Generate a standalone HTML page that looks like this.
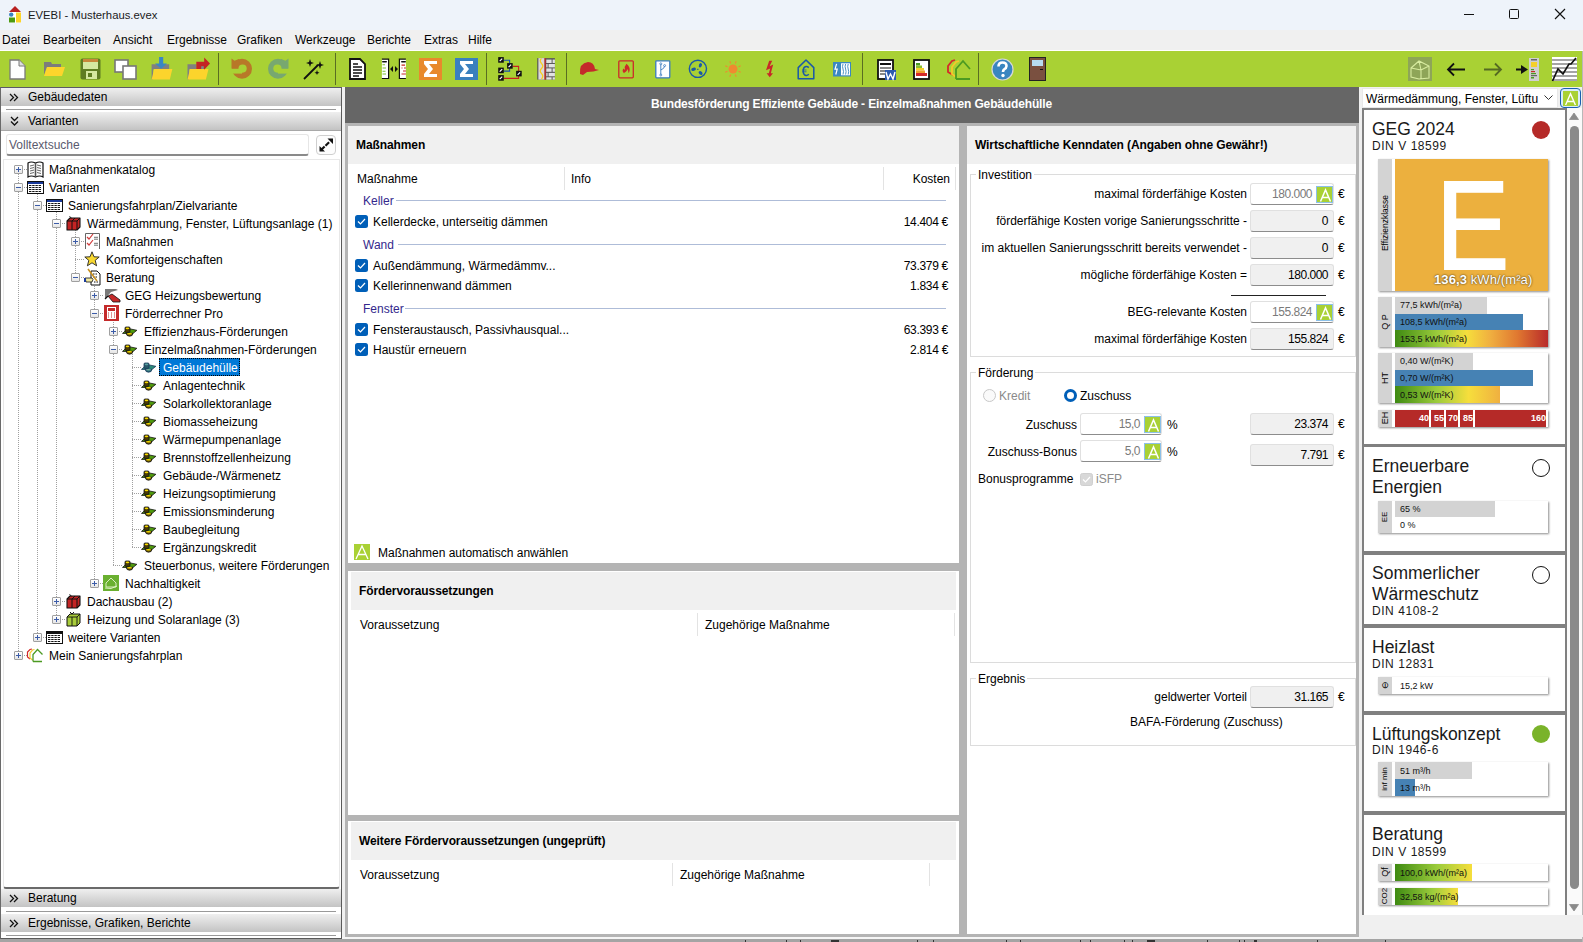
<!DOCTYPE html>
<html><head><meta charset="utf-8">
<style>
*{box-sizing:border-box;margin:0;padding:0}
html,body{width:1583px;height:942px;overflow:hidden;background:#f0f0f0}
body{font-family:"Liberation Sans",sans-serif;font-size:12px;color:#000;position:relative}
.a{position:absolute}
.t{position:absolute;white-space:nowrap;line-height:14px}
svg{position:absolute;overflow:visible}
#title{left:0;top:0;width:1583px;height:30px;background:#eef3fa}
#menu{left:0;top:30px;width:1583px;height:21px;background:#f0f0f0;border-bottom:1px solid #fff}
#tb{left:0;top:51px;width:1583px;height:36px;background:#a9d134}
.sep{position:absolute;top:53px;width:1px;height:32px;background:#5a6e22}
#lp{left:0;top:87px;width:342px;height:852px;background:#fff;border-top:1px solid #5a5a66;border-left:1px solid #6a6a6a;border-right:1px solid #5a5a5a;border-bottom:1px solid #5a5a5a}
.acc{position:absolute;left:1px;width:340px;height:18px;background:linear-gradient(#efefef,#c3c3c3)}
.accl{position:absolute;left:6px;width:330px;height:1px;background:#999}
.acc .t{left:26px;top:2px}
.ex{position:absolute;width:9px;height:9px;border:1px solid #a0a0a0;border-radius:1px;background:linear-gradient(#fff,#e6e6e6)}
.ex i{position:absolute;left:1px;top:3px;width:5px;height:1px;background:#3c5ca8}
.ex b{position:absolute;left:3px;top:1px;width:1px;height:5px;background:#3c5ca8}
.vl{position:absolute;width:1px;border-left:1px dotted #a0a0a0}
.hl{position:absolute;height:1px;border-top:1px dotted #a0a0a0}
#cf{left:345px;top:87px;width:1014px;height:850px;background:#b4b4b4}
#ch{left:345px;top:87px;width:1014px;height:36px;background:#666;color:#fff;font-weight:bold}
.pn{position:absolute;background:#fff}
.ph{position:absolute;background:#f0f0f0}
.b{font-weight:bold;letter-spacing:-0.1px}
.nm{letter-spacing:-0.5px}
.cs{position:absolute;width:1px;background:#e3e3e3}
.grp{position:absolute;border:1px solid #dcdcdc}
.tbx{position:absolute;height:22px;background:#f0f0f0;border:1px solid #e0e0e0;border-bottom:1px solid #8c8c8c;border-radius:3px}
.tbx.w{background:#fff}
.tbx .t{right:4px;top:3px}
.ab{position:absolute;width:17px;height:17px;background:#a9d134;color:#fff;font-size:17px;line-height:17px;text-align:center;border:1px solid #8cc0e8}
#sb{left:1359px;top:87px;width:224px;height:852px;background:#f0f0f0}
.card{position:absolute;left:1364px;width:201px;background:#fff}
.ct{position:absolute;left:8px;font-size:17.5px;line-height:20px;color:#1a1a1a}
.cd{position:absolute;left:8px;font-size:12px;letter-spacing:0.55px;line-height:13px;color:#1a1a1a}
.box{position:absolute;left:14px;width:170px;background:#fff;box-shadow:1px 1px 2px rgba(0,0,0,.45)}
.lab{position:absolute;left:0;top:0;bottom:0;width:14px;background:#d3d3d3}
.bar{position:absolute;left:17px;height:16px}
.bt{position:absolute;left:5px;top:2px;font-size:9px;line-height:12px;color:#111;white-space:nowrap}
.sep4{position:absolute;left:1364px;width:202px;height:4px;background:#808080}
</style></head><body>

<div class="a" id="title">
<svg style="left:8px;top:5px" width="14" height="18" viewBox="0 0 14 18"><path d="M1 7 L7 1 L13 7 Z" fill="#b82020"/><rect x="1" y="7" width="12" height="11" fill="#fff"/><circle cx="3.2" cy="9.6" r="2.2" fill="#3a82c0"/><rect x="8" y="7.5" width="5" height="10" fill="#fcd42a"/><rect x="1" y="12.5" width="6" height="5" fill="#4c9a12"/></svg>
<div class="t" style="left:28px;top:8px;font-size:11.3px;color:#1a1a1a">EVEBI - Musterhaus.evex</div>
<div class="a" style="left:1464px;top:14px;width:10px;height:1px;background:#111"></div>
<div class="a" style="left:1509px;top:9px;width:10px;height:10px;border:1px solid #111;border-radius:1.5px"></div>
<svg style="left:1554px;top:8px" width="12" height="12"><path d="M1 1 L11 11 M11 1 L1 11" stroke="#111" stroke-width="1.15"/></svg>
</div>
<div class="a" id="menu">
<div class="t" style="left:2px;top:3px">Datei</div>
<div class="t" style="left:43px;top:3px">Bearbeiten</div>
<div class="t" style="left:113px;top:3px">Ansicht</div>
<div class="t" style="left:167px;top:3px">Ergebnisse</div>
<div class="t" style="left:237px;top:3px">Grafiken</div>
<div class="t" style="left:295px;top:3px">Werkzeuge</div>
<div class="t" style="left:367px;top:3px">Berichte</div>
<div class="t" style="left:424px;top:3px">Extras</div>
<div class="t" style="left:468px;top:3px">Hilfe</div>
</div>
<div class="a" id="tb"></div>
<div class="sep" style="left:218px"></div>
<div class="sep" style="left:335px"></div>
<div class="sep" style="left:486px"></div>
<div class="sep" style="left:566px"></div>
<div class="sep" style="left:862px"></div>
<div class="sep" style="left:978px"></div>
<svg style="left:9px;top:59px" width="17" height="21" viewBox="0 0 17 21"><path d="M1 1 H10 L16 7 V20 H1 Z" fill="#fff" stroke="#7a7a7a" stroke-width="1.3"/><path d="M10 1 V7 H16" fill="#ddd" stroke="#7a7a7a" stroke-width="1"/></svg>
<svg style="left:43px;top:61px" width="23" height="17" viewBox="0 0 23 17"><path d="M1 1 H8 L9 3 H18 V6 H1 Z" fill="#7c7c7c"/><path d="M1 4 V14 L4 6 Z" fill="#7c7c7c"/><path d="M4 6 H22 L19 15 H1 Z" fill="#fcd52c"/></svg>
<svg style="left:80px;top:58px" width="21" height="22" viewBox="0 0 21 22"><rect x="0.5" y="0.5" width="20" height="21" rx="2" fill="#5f7d22"/><rect x="3" y="1" width="15" height="3" fill="#c8873a"/><rect x="3" y="4" width="15" height="7" fill="#d5e8a0"/><rect x="6" y="13" width="11" height="8" fill="#d5e8a0"/><rect x="8" y="15" width="4" height="4" fill="#5f7d22"/></svg>
<svg style="left:114px;top:59px" width="23" height="21" viewBox="0 0 23 21"><rect x="1" y="1" width="13" height="12" fill="#fff" stroke="#777" stroke-width="1.6"/><rect x="9" y="7" width="13" height="13" fill="#fff" stroke="#777" stroke-width="1.6"/></svg>
<svg style="left:146px;top:55px" width="28" height="28" viewBox="0 0 28 28"><path d="M5.6 9.2 H23.2 V14.2 H7 V24.5 H5.6 Z" fill="#808080"/><path d="M8.2 14 H26.4 L23.8 24.5 H5.6 Z" fill="#fcd42c"/><path d="M13.1 1.9 H17.2 V8.4 H21 L15.2 13.7 L9 8.4 H13.1 Z" fill="#3a86c4"/></svg>
<svg style="left:182px;top:55px" width="30" height="28" viewBox="0 0 30 28"><g transform="translate(-36,0)"><path d="M41.5 9.2 H50.3 V14.2 H43 V24.5 H41.5 Z" fill="#808080"/><path d="M44 14 H62.5 L59.9 24.5 H41.5 Z" fill="#fcd42c"/><path d="M50.3 6.7 H58.2 V2.6 L64 8.6 L58.2 14.8 V14 H50.3 Z" fill="#c42424"/><rect x="55.2" y="11.2" width="2.6" height="2.8" fill="#7a8a8a"/></g></svg>
<svg style="left:228px;top:55px" width="28" height="28" viewBox="0 0 28 28"><circle cx="14" cy="13.8" r="10" fill="#b87828"/><path d="M3.5 3.5 L6.5 5.8 L11 4 L14 13.8 L3.5 13.8 Z" fill="#b87828"/><rect x="0" y="13.8" width="14" height="4.8" fill="#a9d134"/><circle cx="14.6" cy="13.6" r="4.1" fill="#a9d134"/></svg>
<svg style="left:264px;top:55px" width="28" height="28" viewBox="0 0 28 28"><g transform="translate(28,0) scale(-1,1)"><circle cx="14" cy="13.8" r="10" fill="#78a870"/><path d="M3.5 3.5 L6.5 5.8 L11 4 L14 13.8 L3.5 13.8 Z" fill="#78a870"/><rect x="0" y="13.8" width="14" height="4.8" fill="#a9d134"/><circle cx="14.6" cy="13.6" r="4.1" fill="#a9d134"/></g></svg>
<svg style="left:303px;top:58px" width="23" height="22" viewBox="0 0 23 22"><path d="M1 21 L15 7" stroke="#111" stroke-width="1.8"/><path d="M7 1 L8 4 L11 5 L8 6 L7 9 L6 6 L3 5 L6 4 Z M17 3 L18 6 L21 7 L18 8 L17 11 L16 8 L13 7 L16 6 Z M14 12 L14.7 14 L16.5 14.7 L14.7 15.4 L14 17 L13.3 15.4 L11.5 14.7 L13.3 14 Z" fill="#111"/></svg>
<svg style="left:349px;top:58px" width="17" height="22" viewBox="0 0 17 22"><path d="M1 1 H11 L16 6 V21 H1 Z" fill="#fff" stroke="#111" stroke-width="1.8"/><path d="M4 6 H9 M4 9 H13 M4 12 H13 M4 15 H13 M4 18 H10" stroke="#111" stroke-width="1.3"/></svg>
<svg style="left:376px;top:55px" width="32" height="28" viewBox="0 0 32 28"><path d="M5.9 4.2 H12.6 V23.5 H5.9" fill="#fff" stroke="#111" stroke-width="1.2"/><rect x="6" y="5.9" width="5" height="1.6" rx="0.8" fill="#111"/><path d="M6.5 9.8 H9 M6.5 13 H10 M6.5 16.2 H9.5 M6.5 19 H10" stroke="#7cc030" stroke-width="1.1"/><path d="M14 14 L17 11 V17 Z M22 14 L19 11 V17 Z" fill="#111"/><path d="M29.9 4.2 H23.4 V23.5 H29.9" fill="#fff" stroke="#111" stroke-width="1.2"/><rect x="25" y="5.9" width="5" height="1.6" rx="0.8" fill="#111"/><path d="M25.5 10.2 H29 M25.5 13 H26.5 M28 13 H29.9 M27 16 H29.9 M25.5 19 H29.9" stroke="#c82424" stroke-width="1.2"/></svg>
<svg style="left:419px;top:58px" width="23" height="22" viewBox="0 0 23 22"><rect x="0" y="0" width="23" height="22" fill="#e8892c"/><path d="M5 3 H18 V6 H10 L14 11 L10 16 H18 V19 H5 V16 L9 11 L5 6 Z" fill="#fff"/></svg>
<svg style="left:455px;top:58px" width="23" height="22" viewBox="0 0 23 22"><rect x="0" y="0" width="23" height="22" fill="#3a80be"/><path d="M5 3 H18 V6 H10 L14 11 L10 16 H18 V19 H5 V16 L9 11 L5 6 Z" fill="#fff"/></svg>
<svg style="left:494px;top:55px" width="30" height="28" viewBox="0 0 30 28"><path d="M9.8 5.3 H15.6 V8.5 M9.8 16.1 H15.6 V13.5" fill="none" stroke="#1a50b0" stroke-width="1.1"/><path d="M18.8 11.4 H24.6 V16 M9.8 23.4 H24.6 V21" fill="none" stroke="#c82020" stroke-width="1.1"/><rect x="4.2" y="2.1" width="5.6" height="5.6" fill="#111"/><path d="M5.7 6.1 L8.2 3.6" stroke="#fff" stroke-width="1.2"/><rect x="13.1" y="8.1" width="5.6" height="5.6" fill="#111"/><path d="M14.6 12.1 L17.1 9.6" stroke="#fff" stroke-width="1.2"/><rect x="4.2" y="12.6" width="5.6" height="5.6" fill="#111"/><path d="M5.7 16.6 L8.2 14.1" stroke="#fff" stroke-width="1.2"/><rect x="22.1" y="15.8" width="5.6" height="5.6" fill="#111"/><path d="M23.6 19.8 L26.1 17.3" stroke="#fff" stroke-width="1.2"/><rect x="4.2" y="20.1" width="5.6" height="5.6" fill="#111"/><path d="M5.7 24.1 L8.2 21.6" stroke="#fff" stroke-width="1.2"/></svg>
<svg style="left:537px;top:58px" width="18" height="22" viewBox="0 0 18 22"><g transform="translate(-43,-3)"><rect x="43.2" y="3.1" width="17.7" height="21.5" fill="#5a5a5a"/><rect x="44.4" y="3.1" width="6.2" height="21.5" fill="#dadada"/><path d="M47.5 3.5 Q45 5.5 47.5 8.5 Q50 11 47.5 13.5 Q45 16 47.5 18.5 Q50 21 47.5 24" fill="none" stroke="#f8cc20" stroke-width="1.3"/><rect x="50.5" y="3.1" width="1.2" height="21.5" fill="#c82020"/><rect x="52.3" y="4.6" width="5.3" height="3.4" fill="#e2e2e2"/><rect x="58.6" y="4.6" width="2.3" height="3.4" fill="#e2e2e2"/><rect x="52.3" y="9" width="1.3" height="3.4" fill="#e2e2e2"/><rect x="54.6" y="9" width="6.3" height="3.4" fill="#e2e2e2"/><rect x="52.3" y="13.4" width="5.3" height="3.4" fill="#e2e2e2"/><rect x="58.6" y="13.4" width="2.3" height="3.4" fill="#e2e2e2"/><rect x="52.3" y="17.9" width="1.3" height="3.4" fill="#e2e2e2"/><rect x="54.6" y="17.9" width="6.3" height="3.4" fill="#e2e2e2"/><rect x="52.3" y="22.3" width="5.3" height="2.3" fill="#e2e2e2"/><rect x="58.6" y="22.3" width="2.3" height="2.3" fill="#e2e2e2"/></g></svg>
<svg style="left:579px;top:61px" width="21" height="15" viewBox="0 0 21 15"><path d="M1 13 Q0 2 9 1 Q15 1 16 8 L20 9 Q15 11 8 11 L4 14 Z" fill="#c42a2a"/></svg>
<svg style="left:618px;top:60px" width="17" height="19" viewBox="0 0 17 19"><rect x="0.8" y="0.8" width="14.5" height="17" rx="1" fill="none" stroke="#cc2a2a" stroke-width="1.3"/><path d="M8.5 3.8 Q12.5 7 11.5 11 Q11 13 10.5 13 Q10.5 10 9 9 Q9.5 11 7.5 12 Q6.5 12.5 6 13.2 Q3.5 11 5.5 8.5 Q6.5 10 7 9.5 Q6 6.5 8.5 3.8 Z" fill="#cc2a2a"/></svg>
<svg style="left:655px;top:60px" width="16" height="19" viewBox="0 0 16 19"><rect x="0.8" y="0.8" width="14" height="17" rx="0.8" fill="#fff" stroke="#3a7ac0" stroke-width="1.3"/><path d="M5.8 4.5 V14.5 M5.8 10 Q9.5 8.5 9.5 6.3" fill="none" stroke="#3a7ac0" stroke-width="0.9"/><circle cx="5.8" cy="3.8" r="1" fill="none" stroke="#3a7ac0" stroke-width="0.8"/><circle cx="5.8" cy="15" r="1" fill="none" stroke="#3a7ac0" stroke-width="0.8"/><circle cx="9.6" cy="5.6" r="1" fill="none" stroke="#3a7ac0" stroke-width="0.8"/></svg>
<svg style="left:688px;top:59px" width="20" height="20" viewBox="0 0 20 20"><circle cx="9.9" cy="9.8" r="8.6" fill="none" stroke="#1a58a8" stroke-width="1.4"/><ellipse cx="12.4" cy="6.3" rx="1.5" ry="2.3" transform="rotate(20 12.4 6.3)" fill="#1a58a8"/><ellipse cx="5.6" cy="10.3" rx="2.4" ry="1.6" transform="rotate(-15 5.6 10.3)" fill="#1a58a8"/><ellipse cx="12.6" cy="14" rx="2.2" ry="1.6" transform="rotate(40 12.6 14)" fill="#1a58a8"/><path d="M9 10.3 H10.5" stroke="#1a58a8" stroke-width="1"/></svg>
<svg style="left:724px;top:60px" width="18" height="18" viewBox="0 0 18 18"><circle cx="9" cy="9" r="4.5" fill="#f08a30"/><path d="M14.5 11.3 L16.7 12.2 M11.3 14.5 L12.2 16.7 M6.7 14.5 L5.8 16.7 M3.5 11.3 L1.3 12.2 M3.5 6.7 L1.3 5.8 M6.7 3.5 L5.8 1.3 M11.3 3.5 L12.2 1.3 M14.5 6.7 L16.7 5.8 " stroke="#f08a30" stroke-width="1.1"/></svg>
<svg style="left:765px;top:60px" width="10" height="18" viewBox="0 0 10 18"><path d="M4.2 0.8 L7.2 0.8 L4.6 6.2 L8.2 4.6 L5.8 13.2 L8 13.2 L4.8 17.2 L1.6 13.2 L3.8 13.2 L5.2 8.6 L1 10.2 Z" fill="#c82828"/></svg>
<svg style="left:797px;top:59px" width="18" height="21" viewBox="0 0 18 21"><path d="M1.2 8.6 L9 1 L16.8 8.6 V19.8 H1.2 Z" fill="none" stroke="#1a58a8" stroke-width="1.5" stroke-linejoin="round"/><path d="M11.8 8.6 Q10.5 7.3 9 7.5 Q6.2 8 6.2 12 Q6.2 16 9 16.4 Q10.5 16.6 11.8 15.3" fill="none" stroke="#1a58a8" stroke-width="1.5"/><path d="M5.2 11 H9.5 M5.2 12.8 H9.5" stroke="#1a58a8" stroke-width="0.8"/></svg>
<svg style="left:833px;top:62px" width="18" height="15" viewBox="0 0 18 15"><rect x="0" y="0" width="18" height="14.5" fill="#3a88c0"/><path d="M3.6 1.8 L2 7.2 H4.2 L2.8 12.5" stroke="#fff" stroke-width="1.2" fill="none"/><rect x="8" y="1.3" width="9" height="12" fill="#fff"/><path d="M10 2 Q9 4.5 10 7 Q11 9.5 10 12.5 M12.6 2 Q11.6 4.5 12.6 7 Q13.6 9.5 12.6 12.5 M15.2 2 Q14.2 4.5 15.2 7 Q16.2 9.5 15.2 12.5" stroke="#3a88c0" stroke-width="0.9" fill="none"/></svg>
<svg style="left:877px;top:59px" width="20" height="22" viewBox="0 0 20 22"><rect x="1" y="1" width="15" height="19" fill="#fff" stroke="#111" stroke-width="1.8"/><path d="M3 4 H14 V6 H3 Z" fill="#111"/><path d="M3 9 H14 M3 12 H8 M3 15 H8" stroke="#111" stroke-width="1"/><rect x="8" y="11" width="11" height="10" fill="#2a5ab0"/><path d="M9 13 L11 20 L13.5 15 L16 20 L18 13" stroke="#fff" stroke-width="1.4" fill="none"/></svg>
<svg style="left:913px;top:59px" width="17" height="21" viewBox="0 0 17 21"><rect x="1" y="1" width="15" height="19" fill="#fff" stroke="#111" stroke-width="1.8"/><rect x="3" y="4" width="4" height="2.5" fill="#4a9a22"/><rect x="3" y="6.5" width="6" height="2.5" fill="#8cc030"/><rect x="3" y="9" width="8" height="2.5" fill="#f5d02a"/><rect x="3" y="11.5" width="9" height="2.5" fill="#f0a030"/><rect x="3" y="14" width="11" height="3" fill="#d42a2a"/></svg>
<svg style="left:947px;top:59px" width="24" height="21" viewBox="0 0 24 21"><path d="M6 16 L1 13 V7 L5 2 L8 1" fill="none" stroke="#d42a2a" stroke-width="1.8"/><path d="M9 18 L5 15 V8 L9 3 L12 2" fill="none" stroke="#f5c82a" stroke-width="1.8"/><path d="M9 20 V10 L16 2 L23 10 M9 20 H23" fill="none" stroke="#4c9a22" stroke-width="1.8"/></svg>
<svg style="left:991px;top:58px" width="23" height="23" viewBox="0 0 23 23"><circle cx="11.5" cy="11.5" r="10.5" fill="#3a86c0" stroke="#d8d8d8" stroke-width="1.2"/><path d="M7.5 8.5 Q7.5 4.5 11.5 4.5 Q15.5 4.5 15.5 8 Q15.5 10 13 11.5 Q12 12.5 12 14" stroke="#fff" stroke-width="2.6" fill="none"/><circle cx="12" cy="17.5" r="1.7" fill="#fff"/></svg>
<svg style="left:1029px;top:57px" width="17" height="24" viewBox="0 0 17 24"><rect x="0.5" y="0.5" width="16" height="23" fill="#7a5040" stroke="#222" stroke-width="1"/><rect x="3" y="3" width="11" height="6" fill="#b8dcf0"/><rect x="11" y="12" width="3" height="1" fill="#111"/></svg>
<svg style="left:1408px;top:57px" width="24" height="24" viewBox="0 0 24 24"><rect x="0" y="0" width="24" height="24" fill="#8ea558"/><path d="M3 11 L11 4 L21 9 V21 L11 22 L3 20 Z M3 11 L13 13 L21 9 M13 13 V22 M11 4 L13 13" fill="none" stroke="#d8eca0" stroke-width="1.1"/></svg>
<svg style="left:1446px;top:62px" width="20" height="15" viewBox="0 0 20 15"><path d="M19 7.5 H2 M8 1.5 L2 7.5 L8 13.5" fill="none" stroke="#111" stroke-width="1.8"/></svg>
<svg style="left:1483px;top:62px" width="20" height="15" viewBox="0 0 20 15"><path d="M1 7.5 H18 M12 1.5 L18 7.5 L12 13.5" fill="none" stroke="#556a22" stroke-width="1.8"/></svg>
<svg style="left:1516px;top:57px" width="24" height="24" viewBox="0 0 24 24"><path d="M0 12.5 H6" stroke="#111" stroke-width="2"/><path d="M5 8 L12 12.5 L5 17 Z" fill="#111"/><rect x="13" y="1" width="10" height="23" fill="#d0d0d0"/><rect x="15" y="2" width="6" height="1.5" fill="#666"/><rect x="15" y="5" width="6" height="5" fill="#f5d02a"/><rect x="15" y="12" width="3" height="1.2" fill="#4c9a22"/><rect x="15" y="14" width="4" height="1.2" fill="#c82a2a"/><rect x="15" y="16" width="5" height="1.2" fill="#4c9a22"/><rect x="15" y="18" width="6" height="1.2" fill="#666"/><rect x="15" y="20" width="3" height="1.5" fill="#4c9a22"/></svg>
<svg style="left:1552px;top:57px" width="25" height="24" viewBox="0 0 25 24"><rect x="0" y="0" width="25" height="24" fill="#fff"/><path d="M0 3 H25 M0 7 H25 M0 11 H25 M0 15 H25 M0 19 H25 M0 23 H25" stroke="#888" stroke-width="1.4"/><path d="M0.5 24 L6 12 L11 17 L17 7 L19 7 L24 1" fill="none" stroke="#111" stroke-width="1.7"/></svg>
<div class="a" id="lp"></div>
<div class="acc" style="top:88px"><svg style="left:8px;top:5px" width="10" height="9"><path d="M1 1 L4.5 4.5 L1 8 M5 1 L8.5 4.5 L5 8" fill="none" stroke="#111" stroke-width="1.3"/></svg><div class="t" style="left:27px;top:2px">Gebäudedaten</div></div>
<div class="accl" style="top:109px"></div>
<div class="acc" style="top:112px"><svg style="left:9px;top:4px" width="9" height="11"><path d="M1 1 L4.5 4.5 L8 1 M1 5.5 L4.5 9 L8 5.5" fill="none" stroke="#111" stroke-width="1.3"/></svg><div class="t" style="left:27px;top:2px">Varianten</div></div>
<div class="a" style="left:1px;top:130px;width:340px;height:1px;background:#a8a8a8"></div>
<div class="a" style="left:6px;top:134px;width:303px;height:22px;background:#fff;border:1px solid #e6e6e6;border-bottom:2px solid #8a8a8a;border-radius:3px"><div class="t" style="left:2px;top:3px;color:#5a5a6e">Volltextsuche</div></div>
<div class="a" style="left:316px;top:135px;width:20px;height:20px;background:#fdfdfd;border:1px solid #cfcfcf;border-radius:4px"></div>
<svg style="left:319px;top:138px" width="15" height="14"><path d="M2 12 L13 1.5" stroke="#111" stroke-width="2.2" stroke-dasharray="5 1.2 5"/><path d="M0.5 8 V13.5 H6 Z M8.5 0.5 H14 V6 Z" fill="#111"/></svg>
<div class="a" style="left:3px;top:159px;width:337px;height:730px;border:1px solid #e8e8e8;border-bottom:2px solid #6a6a6a;border-radius:0 0 3px 3px;background:#fff"></div>
<div class="vl" style="left:18px;top:169px;height:486px"></div>
<div class="vl" style="left:37px;top:192px;height:445px"></div>
<div class="vl" style="left:56px;top:210px;height:409px"></div>
<div class="vl" style="left:75px;top:228px;height:49px"></div>
<div class="vl" style="left:94px;top:282px;height:301px"></div>
<div class="vl" style="left:113px;top:318px;height:247px"></div>
<div class="vl" style="left:132px;top:354px;height:193px"></div>
<div class="hl" style="left:18px;top:169px;width:9px"></div>
<div class="ex" style="left:14px;top:165px"><i></i><b></b></div>
<svg style="left:27px;top:161px" width="17" height="17" viewBox="0 0 17 17"><path d="M1 2 Q4 0 8.5 2 Q13 0 16 2 V16 Q13 14 8.5 16 Q4 14 1 16 Z" fill="#fff" stroke="#111" stroke-width="1.2"/><path d="M8.5 2 V16" stroke="#555" stroke-width="1.6"/><path d="M3 5 L7 4 M3 7.5 L7 6.5 M3 10 L7 9 M3 12.5 L7 11.5 M10 4 L14 5 M10 6.5 L14 7.5 M10 9 L14 10 M10 11.5 L14 12.5" stroke="#555" stroke-width="0.9"/></svg>
<div class="t" style="left:49px;top:163px">Maßnahmenkatalog</div>
<div class="hl" style="left:18px;top:187px;width:9px"></div>
<div class="ex" style="left:14px;top:183px"><i></i></div>
<svg style="left:27px;top:181px" width="17" height="13" viewBox="0 0 17 13"><rect x="0.5" y="0.5" width="16" height="12" fill="#fff" stroke="#111" stroke-width="1"/><rect x="1" y="1" width="15" height="2" fill="#1a3a9a"/><rect x="2.0" y="4" width="2.4" height="1" fill="#111"/><rect x="5.2" y="4" width="2.4" height="1" fill="#111"/><rect x="8.4" y="4" width="2.4" height="1" fill="#111"/><rect x="11.6" y="4" width="2.4" height="1" fill="#111"/><rect x="2.0" y="6" width="2.4" height="1" fill="#111"/><rect x="5.2" y="6" width="2.4" height="1" fill="#111"/><rect x="8.4" y="6" width="2.4" height="1" fill="#111"/><rect x="11.6" y="6" width="2.4" height="1" fill="#111"/><rect x="2.0" y="8" width="2.4" height="1" fill="#111"/><rect x="5.2" y="8" width="2.4" height="1" fill="#111"/><rect x="8.4" y="8" width="2.4" height="1" fill="#111"/><rect x="11.6" y="8" width="2.4" height="1" fill="#111"/><rect x="2.0" y="10" width="2.4" height="1" fill="#111"/><rect x="5.2" y="10" width="2.4" height="1" fill="#111"/><rect x="8.4" y="10" width="2.4" height="1" fill="#111"/><rect x="11.6" y="10" width="2.4" height="1" fill="#111"/></svg>
<div class="t" style="left:49px;top:181px">Varianten</div>
<div class="hl" style="left:37px;top:205px;width:9px"></div>
<div class="ex" style="left:33px;top:201px"><i></i></div>
<svg style="left:46px;top:199px" width="17" height="13" viewBox="0 0 17 13"><rect x="0.5" y="0.5" width="16" height="12" fill="#fff" stroke="#111" stroke-width="1"/><rect x="1" y="1" width="15" height="2" fill="#1a3a9a"/><rect x="2.0" y="4" width="2.4" height="1" fill="#111"/><rect x="5.2" y="4" width="2.4" height="1" fill="#111"/><rect x="8.4" y="4" width="2.4" height="1" fill="#111"/><rect x="11.6" y="4" width="2.4" height="1" fill="#111"/><rect x="2.0" y="6" width="2.4" height="1" fill="#111"/><rect x="5.2" y="6" width="2.4" height="1" fill="#111"/><rect x="8.4" y="6" width="2.4" height="1" fill="#111"/><rect x="11.6" y="6" width="2.4" height="1" fill="#111"/><rect x="2.0" y="8" width="2.4" height="1" fill="#111"/><rect x="5.2" y="8" width="2.4" height="1" fill="#111"/><rect x="8.4" y="8" width="2.4" height="1" fill="#111"/><rect x="11.6" y="8" width="2.4" height="1" fill="#111"/><rect x="2.0" y="10" width="2.4" height="1" fill="#111"/><rect x="5.2" y="10" width="2.4" height="1" fill="#111"/><rect x="8.4" y="10" width="2.4" height="1" fill="#111"/><rect x="11.6" y="10" width="2.4" height="1" fill="#111"/></svg>
<div class="t" style="left:68px;top:199px">Sanierungsfahrplan/Zielvariante</div>
<div class="hl" style="left:56px;top:223px;width:9px"></div>
<div class="ex" style="left:52px;top:219px"><i></i></div>
<svg style="left:66px;top:216px" width="15" height="15" viewBox="0 0 15 15"><path d="M1 5 L4 2 H14 V11 L11 14 H1 Z" fill="#c42424" stroke="#111" stroke-width="1.1" stroke-linejoin="round"/><path d="M1 5 H11 V14 M11 5 L14 2 M6 5 V14 M6 5 L9 2" stroke="#111" stroke-width="1" fill="none"/><path d="M3.5 0.5 L5.5 2" stroke="#111" stroke-width="1"/></svg>
<div class="t" style="left:87px;top:217px">Wärmedämmung, Fenster, Lüftungsanlage (1)</div>
<div class="hl" style="left:75px;top:241px;width:9px"></div>
<div class="ex" style="left:71px;top:237px"><i></i><b></b></div>
<svg style="left:85px;top:233px" width="15" height="16" viewBox="0 0 15 16"><path d="M0.5 16 V0.5 H14.5 V16" fill="#fff" stroke="#666" stroke-width="1"/><path d="M2 4 L4 6 L8 1 M2 10 L4 12 L8 7" stroke="#d03a3a" stroke-width="1.2" fill="none"/><path d="M9 4.3 H13 M9 6.2 H13 M9 10.3 H13 M9 12.2 H13" stroke="#333" stroke-width="0.7"/></svg>
<div class="t" style="left:106px;top:235px">Maßnahmen</div>
<div class="hl" style="left:75px;top:259px;width:9px"></div>
<svg style="left:84px;top:251px" width="16" height="16" viewBox="0 0 16 16"><path d="M8 0.8 L10 5.8 L15.2 6 L11.2 9.4 L12.6 14.8 L8 11.8 L3.4 14.8 L4.8 9.4 L0.8 6 L6 5.8 Z" fill="#f8d830" stroke="#222" stroke-width="0.9"/></svg>
<div class="t" style="left:106px;top:253px">Komforteigenschaften</div>
<div class="hl" style="left:75px;top:277px;width:9px"></div>
<div class="ex" style="left:71px;top:273px"><i></i></div>
<svg style="left:84px;top:269px" width="17" height="17" viewBox="0 0 17 17"><path d="M7 2 H13 L16 5 V16 H7 Z" fill="#fff" stroke="#111" stroke-width="1"/><path d="M9 5 H13 M9 8 H14 M10 13 H14" stroke="#111" stroke-dasharray="1.5 1"/><path d="M1 9 H8 Q10 10 8 13 H2 Z" fill="#f0e8a0" stroke="#111" stroke-width="0.8"/><path d="M4 0 L13 12" stroke="#c89020" stroke-width="1.5"/><rect x="0" y="9" width="2" height="4" fill="#1a3a9a"/></svg>
<div class="t" style="left:106px;top:271px">Beratung</div>
<div class="hl" style="left:94px;top:295px;width:9px"></div>
<div class="ex" style="left:90px;top:291px"><i></i><b></b></div>
<svg style="left:103px;top:288px" width="17" height="14" viewBox="0 0 17 14"><path d="M2 1 H13 L15 2 L8 4 L2 11 Z" fill="#7a7a7a"/><path d="M5 8 L9 6 L17 12 V14 H10 Z" fill="#c42a2a" stroke="#111" stroke-width="0.8"/><path d="M2 11 L5 8" stroke="#111" stroke-width="1.2"/></svg>
<div class="t" style="left:125px;top:289px">GEG Heizungsbewertung</div>
<div class="hl" style="left:94px;top:313px;width:9px"></div>
<div class="ex" style="left:90px;top:309px"><i></i></div>
<svg style="left:104px;top:305px" width="15" height="16" viewBox="0 0 15 16"><rect x="0" y="0" width="15" height="16" fill="#c42a2a"/><rect x="3" y="2" width="9" height="12" fill="#fff"/><rect x="4" y="3" width="7" height="3" fill="#c42a2a"/><path d="M4 8 H5 M7 8 H8 M10 8 H11 M4 10 H5 M7 10 H8 M10 10 H11 M4 12 H5 M7 12 H8 M10 12 H11" stroke="#c42a2a" stroke-width="1"/></svg>
<div class="t" style="left:125px;top:307px">Förderrechner Pro</div>
<div class="hl" style="left:113px;top:331px;width:9px"></div>
<div class="ex" style="left:109px;top:327px"><i></i><b></b></div>
<svg style="left:122px;top:326px" width="16" height="11" viewBox="0 0 16 11"><path d="M0.5 7.4 L3 5.2 L8 2.9 L14.9 4.3 L10.9 7.5 Z" fill="#4e9a0c" stroke="#111" stroke-width="0.8" stroke-linejoin="round"/><rect x="3" y="1" width="5" height="5.4" rx="1" fill="#4a3c06" stroke="#111" stroke-width="0.8"/><ellipse cx="5.5" cy="2.4" rx="1.8" ry="0.8" fill="#f8dc00"/><path d="M4.2 7.3 Q4.4 10.2 7.5 10.2 Q10.9 10.2 10.9 7.3 Z" fill="#6a5806" stroke="#111" stroke-width="0.8"/><ellipse cx="7.5" cy="7.8" rx="2.6" ry="0.8" fill="#f8dc00"/></svg>
<div class="t" style="left:144px;top:325px">Effizienzhaus-Förderungen</div>
<div class="hl" style="left:113px;top:349px;width:9px"></div>
<div class="ex" style="left:109px;top:345px"><i></i></div>
<svg style="left:122px;top:344px" width="16" height="11" viewBox="0 0 16 11"><path d="M0.5 7.4 L3 5.2 L8 2.9 L14.9 4.3 L10.9 7.5 Z" fill="#4e9a0c" stroke="#111" stroke-width="0.8" stroke-linejoin="round"/><rect x="3" y="1" width="5" height="5.4" rx="1" fill="#4a3c06" stroke="#111" stroke-width="0.8"/><ellipse cx="5.5" cy="2.4" rx="1.8" ry="0.8" fill="#f8dc00"/><path d="M4.2 7.3 Q4.4 10.2 7.5 10.2 Q10.9 10.2 10.9 7.3 Z" fill="#6a5806" stroke="#111" stroke-width="0.8"/><ellipse cx="7.5" cy="7.8" rx="2.6" ry="0.8" fill="#f8dc00"/></svg>
<div class="t" style="left:144px;top:343px">Einzelmaßnahmen-Förderungen</div>
<div class="hl" style="left:132px;top:367px;width:9px"></div>
<svg style="left:141px;top:362px" width="16" height="11" viewBox="0 0 16 11"><path d="M0.5 7.4 L3 5.2 L8 2.9 L14.9 4.3 L10.9 7.5 Z" fill="#2a8a7a" stroke="#1a3a5a" stroke-width="0.8" stroke-linejoin="round"/><rect x="3" y="1" width="5" height="5.4" rx="1" fill="#2a5a6a" stroke="#1a3a5a" stroke-width="0.8"/><ellipse cx="5.5" cy="2.4" rx="1.8" ry="0.8" fill="#5aa0a0"/><path d="M4.2 7.3 Q4.4 10.2 7.5 10.2 Q10.9 10.2 10.9 7.3 Z" fill="#2a6a7a" stroke="#1a3a5a" stroke-width="0.8"/><ellipse cx="7.5" cy="7.8" rx="2.6" ry="0.8" fill="#7ab0a0"/></svg>
<div class="a" style="left:159px;top:358px;width:81px;height:18px;background:#0078d7;outline:1px dotted #000;outline-offset:-1px"></div>
<div class="t" style="left:163px;top:361px;color:#fff">Gebäudehülle</div>
<div class="hl" style="left:132px;top:385px;width:9px"></div>
<svg style="left:141px;top:380px" width="16" height="11" viewBox="0 0 16 11"><path d="M0.5 7.4 L3 5.2 L8 2.9 L14.9 4.3 L10.9 7.5 Z" fill="#4e9a0c" stroke="#111" stroke-width="0.8" stroke-linejoin="round"/><rect x="3" y="1" width="5" height="5.4" rx="1" fill="#4a3c06" stroke="#111" stroke-width="0.8"/><ellipse cx="5.5" cy="2.4" rx="1.8" ry="0.8" fill="#f8dc00"/><path d="M4.2 7.3 Q4.4 10.2 7.5 10.2 Q10.9 10.2 10.9 7.3 Z" fill="#6a5806" stroke="#111" stroke-width="0.8"/><ellipse cx="7.5" cy="7.8" rx="2.6" ry="0.8" fill="#f8dc00"/></svg>
<div class="t" style="left:163px;top:379px">Anlagentechnik</div>
<div class="hl" style="left:132px;top:403px;width:9px"></div>
<svg style="left:141px;top:398px" width="16" height="11" viewBox="0 0 16 11"><path d="M0.5 7.4 L3 5.2 L8 2.9 L14.9 4.3 L10.9 7.5 Z" fill="#4e9a0c" stroke="#111" stroke-width="0.8" stroke-linejoin="round"/><rect x="3" y="1" width="5" height="5.4" rx="1" fill="#4a3c06" stroke="#111" stroke-width="0.8"/><ellipse cx="5.5" cy="2.4" rx="1.8" ry="0.8" fill="#f8dc00"/><path d="M4.2 7.3 Q4.4 10.2 7.5 10.2 Q10.9 10.2 10.9 7.3 Z" fill="#6a5806" stroke="#111" stroke-width="0.8"/><ellipse cx="7.5" cy="7.8" rx="2.6" ry="0.8" fill="#f8dc00"/></svg>
<div class="t" style="left:163px;top:397px">Solarkollektoranlage</div>
<div class="hl" style="left:132px;top:421px;width:9px"></div>
<svg style="left:141px;top:416px" width="16" height="11" viewBox="0 0 16 11"><path d="M0.5 7.4 L3 5.2 L8 2.9 L14.9 4.3 L10.9 7.5 Z" fill="#4e9a0c" stroke="#111" stroke-width="0.8" stroke-linejoin="round"/><rect x="3" y="1" width="5" height="5.4" rx="1" fill="#4a3c06" stroke="#111" stroke-width="0.8"/><ellipse cx="5.5" cy="2.4" rx="1.8" ry="0.8" fill="#f8dc00"/><path d="M4.2 7.3 Q4.4 10.2 7.5 10.2 Q10.9 10.2 10.9 7.3 Z" fill="#6a5806" stroke="#111" stroke-width="0.8"/><ellipse cx="7.5" cy="7.8" rx="2.6" ry="0.8" fill="#f8dc00"/></svg>
<div class="t" style="left:163px;top:415px">Biomasseheizung</div>
<div class="hl" style="left:132px;top:439px;width:9px"></div>
<svg style="left:141px;top:434px" width="16" height="11" viewBox="0 0 16 11"><path d="M0.5 7.4 L3 5.2 L8 2.9 L14.9 4.3 L10.9 7.5 Z" fill="#4e9a0c" stroke="#111" stroke-width="0.8" stroke-linejoin="round"/><rect x="3" y="1" width="5" height="5.4" rx="1" fill="#4a3c06" stroke="#111" stroke-width="0.8"/><ellipse cx="5.5" cy="2.4" rx="1.8" ry="0.8" fill="#f8dc00"/><path d="M4.2 7.3 Q4.4 10.2 7.5 10.2 Q10.9 10.2 10.9 7.3 Z" fill="#6a5806" stroke="#111" stroke-width="0.8"/><ellipse cx="7.5" cy="7.8" rx="2.6" ry="0.8" fill="#f8dc00"/></svg>
<div class="t" style="left:163px;top:433px">Wärmepumpenanlage</div>
<div class="hl" style="left:132px;top:457px;width:9px"></div>
<svg style="left:141px;top:452px" width="16" height="11" viewBox="0 0 16 11"><path d="M0.5 7.4 L3 5.2 L8 2.9 L14.9 4.3 L10.9 7.5 Z" fill="#4e9a0c" stroke="#111" stroke-width="0.8" stroke-linejoin="round"/><rect x="3" y="1" width="5" height="5.4" rx="1" fill="#4a3c06" stroke="#111" stroke-width="0.8"/><ellipse cx="5.5" cy="2.4" rx="1.8" ry="0.8" fill="#f8dc00"/><path d="M4.2 7.3 Q4.4 10.2 7.5 10.2 Q10.9 10.2 10.9 7.3 Z" fill="#6a5806" stroke="#111" stroke-width="0.8"/><ellipse cx="7.5" cy="7.8" rx="2.6" ry="0.8" fill="#f8dc00"/></svg>
<div class="t" style="left:163px;top:451px">Brennstoffzellenheizung</div>
<div class="hl" style="left:132px;top:475px;width:9px"></div>
<svg style="left:141px;top:470px" width="16" height="11" viewBox="0 0 16 11"><path d="M0.5 7.4 L3 5.2 L8 2.9 L14.9 4.3 L10.9 7.5 Z" fill="#4e9a0c" stroke="#111" stroke-width="0.8" stroke-linejoin="round"/><rect x="3" y="1" width="5" height="5.4" rx="1" fill="#4a3c06" stroke="#111" stroke-width="0.8"/><ellipse cx="5.5" cy="2.4" rx="1.8" ry="0.8" fill="#f8dc00"/><path d="M4.2 7.3 Q4.4 10.2 7.5 10.2 Q10.9 10.2 10.9 7.3 Z" fill="#6a5806" stroke="#111" stroke-width="0.8"/><ellipse cx="7.5" cy="7.8" rx="2.6" ry="0.8" fill="#f8dc00"/></svg>
<div class="t" style="left:163px;top:469px">Gebäude-/Wärmenetz</div>
<div class="hl" style="left:132px;top:493px;width:9px"></div>
<svg style="left:141px;top:488px" width="16" height="11" viewBox="0 0 16 11"><path d="M0.5 7.4 L3 5.2 L8 2.9 L14.9 4.3 L10.9 7.5 Z" fill="#4e9a0c" stroke="#111" stroke-width="0.8" stroke-linejoin="round"/><rect x="3" y="1" width="5" height="5.4" rx="1" fill="#4a3c06" stroke="#111" stroke-width="0.8"/><ellipse cx="5.5" cy="2.4" rx="1.8" ry="0.8" fill="#f8dc00"/><path d="M4.2 7.3 Q4.4 10.2 7.5 10.2 Q10.9 10.2 10.9 7.3 Z" fill="#6a5806" stroke="#111" stroke-width="0.8"/><ellipse cx="7.5" cy="7.8" rx="2.6" ry="0.8" fill="#f8dc00"/></svg>
<div class="t" style="left:163px;top:487px">Heizungsoptimierung</div>
<div class="hl" style="left:132px;top:511px;width:9px"></div>
<svg style="left:141px;top:506px" width="16" height="11" viewBox="0 0 16 11"><path d="M0.5 7.4 L3 5.2 L8 2.9 L14.9 4.3 L10.9 7.5 Z" fill="#4e9a0c" stroke="#111" stroke-width="0.8" stroke-linejoin="round"/><rect x="3" y="1" width="5" height="5.4" rx="1" fill="#4a3c06" stroke="#111" stroke-width="0.8"/><ellipse cx="5.5" cy="2.4" rx="1.8" ry="0.8" fill="#f8dc00"/><path d="M4.2 7.3 Q4.4 10.2 7.5 10.2 Q10.9 10.2 10.9 7.3 Z" fill="#6a5806" stroke="#111" stroke-width="0.8"/><ellipse cx="7.5" cy="7.8" rx="2.6" ry="0.8" fill="#f8dc00"/></svg>
<div class="t" style="left:163px;top:505px">Emissionsminderung</div>
<div class="hl" style="left:132px;top:529px;width:9px"></div>
<svg style="left:141px;top:524px" width="16" height="11" viewBox="0 0 16 11"><path d="M0.5 7.4 L3 5.2 L8 2.9 L14.9 4.3 L10.9 7.5 Z" fill="#4e9a0c" stroke="#111" stroke-width="0.8" stroke-linejoin="round"/><rect x="3" y="1" width="5" height="5.4" rx="1" fill="#4a3c06" stroke="#111" stroke-width="0.8"/><ellipse cx="5.5" cy="2.4" rx="1.8" ry="0.8" fill="#f8dc00"/><path d="M4.2 7.3 Q4.4 10.2 7.5 10.2 Q10.9 10.2 10.9 7.3 Z" fill="#6a5806" stroke="#111" stroke-width="0.8"/><ellipse cx="7.5" cy="7.8" rx="2.6" ry="0.8" fill="#f8dc00"/></svg>
<div class="t" style="left:163px;top:523px">Baubegleitung</div>
<div class="hl" style="left:132px;top:547px;width:9px"></div>
<svg style="left:141px;top:542px" width="16" height="11" viewBox="0 0 16 11"><path d="M0.5 7.4 L3 5.2 L8 2.9 L14.9 4.3 L10.9 7.5 Z" fill="#4e9a0c" stroke="#111" stroke-width="0.8" stroke-linejoin="round"/><rect x="3" y="1" width="5" height="5.4" rx="1" fill="#4a3c06" stroke="#111" stroke-width="0.8"/><ellipse cx="5.5" cy="2.4" rx="1.8" ry="0.8" fill="#f8dc00"/><path d="M4.2 7.3 Q4.4 10.2 7.5 10.2 Q10.9 10.2 10.9 7.3 Z" fill="#6a5806" stroke="#111" stroke-width="0.8"/><ellipse cx="7.5" cy="7.8" rx="2.6" ry="0.8" fill="#f8dc00"/></svg>
<div class="t" style="left:163px;top:541px">Ergänzungskredit</div>
<div class="hl" style="left:113px;top:565px;width:9px"></div>
<svg style="left:122px;top:560px" width="16" height="11" viewBox="0 0 16 11"><path d="M0.5 7.4 L3 5.2 L8 2.9 L14.9 4.3 L10.9 7.5 Z" fill="#4e9a0c" stroke="#111" stroke-width="0.8" stroke-linejoin="round"/><rect x="3" y="1" width="5" height="5.4" rx="1" fill="#4a3c06" stroke="#111" stroke-width="0.8"/><ellipse cx="5.5" cy="2.4" rx="1.8" ry="0.8" fill="#f8dc00"/><path d="M4.2 7.3 Q4.4 10.2 7.5 10.2 Q10.9 10.2 10.9 7.3 Z" fill="#6a5806" stroke="#111" stroke-width="0.8"/><ellipse cx="7.5" cy="7.8" rx="2.6" ry="0.8" fill="#f8dc00"/></svg>
<div class="t" style="left:144px;top:559px">Steuerbonus, weitere Förderungen</div>
<div class="hl" style="left:94px;top:583px;width:9px"></div>
<div class="ex" style="left:90px;top:579px"><i></i><b></b></div>
<svg style="left:103px;top:575px" width="16" height="16" viewBox="0 0 16 16"><rect x="0" y="0" width="16" height="16" fill="#6ab030"/><path d="M3 8 L8 3 L13 8 V12 H3 Z" fill="none" stroke="#e8f5d0" stroke-width="0.9"/><path d="M2 13 Q8 15 14 11" stroke="#e8f5d0" stroke-width="0.9" fill="none"/></svg>
<div class="t" style="left:125px;top:577px">Nachhaltigkeit</div>
<div class="hl" style="left:56px;top:601px;width:9px"></div>
<div class="ex" style="left:52px;top:597px"><i></i><b></b></div>
<svg style="left:66px;top:594px" width="15" height="15" viewBox="0 0 15 15"><path d="M1 5 L4 2 H14 V11 L11 14 H1 Z" fill="#c42424" stroke="#111" stroke-width="1.1" stroke-linejoin="round"/><path d="M1 5 H11 V14 M11 5 L14 2 M6 5 V14 M6 5 L9 2" stroke="#111" stroke-width="1" fill="none"/><path d="M3.5 0.5 L5.5 2" stroke="#111" stroke-width="1"/></svg>
<div class="t" style="left:87px;top:595px">Dachausbau (2)</div>
<div class="hl" style="left:56px;top:619px;width:9px"></div>
<div class="ex" style="left:52px;top:615px"><i></i><b></b></div>
<svg style="left:66px;top:612px" width="15" height="15" viewBox="0 0 15 15"><path d="M1 5 L4 2 H14 V11 L11 14 H1 Z" fill="#a8cc3a" stroke="#111" stroke-width="1"/><path d="M1 5 H11 V14 M11 5 L14 2 M6 5 V14" stroke="#111" stroke-width="0.9" fill="none"/><path d="M4 0 L6 2 L8 0" stroke="#111" fill="none"/></svg>
<div class="t" style="left:87px;top:613px">Heizung und Solaranlage (3)</div>
<div class="hl" style="left:37px;top:637px;width:9px"></div>
<div class="ex" style="left:33px;top:633px"><i></i><b></b></div>
<svg style="left:46px;top:631px" width="17" height="13" viewBox="0 0 17 13"><rect x="0.5" y="0.5" width="16" height="12" fill="#fff" stroke="#111" stroke-width="1"/><rect x="1" y="1" width="15" height="2" fill="#111"/><rect x="2.0" y="4" width="2.4" height="1" fill="#111"/><rect x="5.2" y="4" width="2.4" height="1" fill="#111"/><rect x="8.4" y="4" width="2.4" height="1" fill="#111"/><rect x="11.6" y="4" width="2.4" height="1" fill="#111"/><rect x="2.0" y="6" width="2.4" height="1" fill="#111"/><rect x="5.2" y="6" width="2.4" height="1" fill="#111"/><rect x="8.4" y="6" width="2.4" height="1" fill="#111"/><rect x="11.6" y="6" width="2.4" height="1" fill="#111"/><rect x="2.0" y="8" width="2.4" height="1" fill="#111"/><rect x="5.2" y="8" width="2.4" height="1" fill="#111"/><rect x="8.4" y="8" width="2.4" height="1" fill="#111"/><rect x="11.6" y="8" width="2.4" height="1" fill="#111"/><rect x="2.0" y="10" width="2.4" height="1" fill="#111"/><rect x="5.2" y="10" width="2.4" height="1" fill="#111"/><rect x="8.4" y="10" width="2.4" height="1" fill="#111"/><rect x="11.6" y="10" width="2.4" height="1" fill="#111"/></svg>
<div class="t" style="left:68px;top:631px">weitere Varianten</div>
<div class="hl" style="left:18px;top:655px;width:9px"></div>
<div class="ex" style="left:14px;top:651px"><i></i><b></b></div>
<svg style="left:27px;top:648px" width="16" height="14" viewBox="0 0 16 14"><path d="M3 11 L0.5 9 V4 L3 1.5 L5 1" fill="none" stroke="#d42a2a" stroke-width="1.2"/><path d="M5.5 12 L3 10 V5 L5.5 2 L7.5 1.5" fill="none" stroke="#f5c82a" stroke-width="1.2"/><path d="M6 13.5 V6.5 L10.5 1.5 L15.5 6.5 M6 13.5 H15" fill="none" stroke="#4c9a22" stroke-width="1.3"/></svg>
<div class="t" style="left:49px;top:649px">Mein Sanierungsfahrplan</div>
<div class="accl" style="top:888px;left:3px;width:337px;height:0"></div>
<div class="acc" style="top:889px"><svg style="left:8px;top:5px" width="10" height="9"><path d="M1 1 L4.5 4.5 L1 8 M5 1 L8.5 4.5 L5 8" fill="none" stroke="#111" stroke-width="1.3"/></svg><div class="t" style="left:27px;top:2px">Beratung</div></div>
<div class="accl" style="top:911px"></div>
<div class="acc" style="top:914px"><svg style="left:8px;top:5px" width="10" height="9"><path d="M1 1 L4.5 4.5 L1 8 M5 1 L8.5 4.5 L5 8" fill="none" stroke="#111" stroke-width="1.3"/></svg><div class="t" style="left:27px;top:2px">Ergebnisse, Grafiken, Berichte</div></div>
<div class="accl" style="top:935px"></div>
<div class="a" id="cf"></div>
<div class="a" style="left:342px;top:87px;width:3px;height:852px;background:#f0f0f0"></div>
<div class="a" id="ch"><div class="t" style="left:306px;top:10px;font-size:12px;letter-spacing:-0.15px">Bundesförderung Effiziente Gebäude - Einzelmaßnahmen Gebäudehülle</div></div>
<div class="pn" style="left:348px;top:126px;width:611px;height:437px"></div>
<div class="ph" style="left:348px;top:126px;width:611px;height:38px"><div class="t b" style="left:8px;top:12px">Maßnahmen</div></div>
<div class="t" style="left:357px;top:172px">Maßnahme</div>
<div class="cs" style="left:564px;top:167px;height:23px"></div>
<div class="t" style="left:571px;top:172px">Info</div>
<div class="cs" style="left:883px;top:167px;height:23px"></div>
<div class="t" style="right:633px;top:172px">Kosten</div>
<div class="cs" style="left:955px;top:167px;height:23px"></div>
<div class="t" style="left:363px;top:194px;color:#34288c">Keller</div><div class="a" style="left:396px;top:200px;width:550px;height:1px;background:#aebcd8"></div>
<div class="a" style="left:355px;top:215px;width:13px;height:13px;background:#005fb8;border-radius:2.5px"></div><svg style="left:357px;top:217px" width="9" height="9"><path d="M1 4.5 L3.5 7 L8 2" fill="none" stroke="#fff" stroke-width="1.2"/></svg><div class="t" style="left:373px;top:215px">Kellerdecke, unterseitig dämmen</div><div class="t" style="right:635px;top:215px;letter-spacing:-0.3px">14.404 €</div>
<div class="t" style="left:363px;top:238px;color:#34288c">Wand</div><div class="a" style="left:398px;top:244px;width:548px;height:1px;background:#aebcd8"></div>
<div class="a" style="left:355px;top:259px;width:13px;height:13px;background:#005fb8;border-radius:2.5px"></div><svg style="left:357px;top:261px" width="9" height="9"><path d="M1 4.5 L3.5 7 L8 2" fill="none" stroke="#fff" stroke-width="1.2"/></svg><div class="t" style="left:373px;top:259px">Außendämmung, Wärmedämmv...</div><div class="t" style="right:635px;top:259px;letter-spacing:-0.3px">73.379 €</div>
<div class="a" style="left:355px;top:279px;width:13px;height:13px;background:#005fb8;border-radius:2.5px"></div><svg style="left:357px;top:281px" width="9" height="9"><path d="M1 4.5 L3.5 7 L8 2" fill="none" stroke="#fff" stroke-width="1.2"/></svg><div class="t" style="left:373px;top:279px">Kellerinnenwand dämmen</div><div class="t" style="right:635px;top:279px;letter-spacing:-0.3px">1.834 €</div>
<div class="t" style="left:363px;top:302px;color:#34288c">Fenster</div><div class="a" style="left:405px;top:308px;width:541px;height:1px;background:#aebcd8"></div>
<div class="a" style="left:355px;top:323px;width:13px;height:13px;background:#005fb8;border-radius:2.5px"></div><svg style="left:357px;top:325px" width="9" height="9"><path d="M1 4.5 L3.5 7 L8 2" fill="none" stroke="#fff" stroke-width="1.2"/></svg><div class="t" style="left:373px;top:323px">Fensteraustausch, Passivhausqual...</div><div class="t" style="right:635px;top:323px;letter-spacing:-0.3px">63.393 €</div>
<div class="a" style="left:355px;top:343px;width:13px;height:13px;background:#005fb8;border-radius:2.5px"></div><svg style="left:357px;top:345px" width="9" height="9"><path d="M1 4.5 L3.5 7 L8 2" fill="none" stroke="#fff" stroke-width="1.2"/></svg><div class="t" style="left:373px;top:343px">Haustür erneuern</div><div class="t" style="right:635px;top:343px;letter-spacing:-0.3px">2.814 €</div>
<div class="a" style="left:354px;top:544px;width:16px;height:16px;background:#a9d134;overflow:hidden"><svg style="left:1px;top:1px" width="14" height="14"><path d="M1 14 L7 1 L13 14 M3.2 9.5 H10.8" fill="none" stroke="#fff" stroke-width="1.3"/></svg></div>
<div class="t" style="left:378px;top:546px">Maßnahmen automatisch anwählen</div>
<div class="pn" style="left:348px;top:571px;width:611px;height:244px"></div>
<div class="ph" style="left:351px;top:572px;width:605px;height:38px"><div class="t b" style="left:8px;top:12px">Fördervoraussetzungen</div></div>
<div class="t" style="left:360px;top:618px">Voraussetzung</div>
<div class="cs" style="left:697px;top:613px;height:23px"></div>
<div class="t" style="left:705px;top:618px">Zugehörige Maßnahme</div>
<div class="cs" style="left:954px;top:613px;height:23px"></div>
<div class="pn" style="left:348px;top:821px;width:611px;height:113px"></div>
<div class="ph" style="left:351px;top:822px;width:605px;height:38px"><div class="t b" style="left:8px;top:12px">Weitere Fördervoraussetzungen (ungeprüft)</div></div>
<div class="t" style="left:360px;top:868px">Voraussetzung</div>
<div class="cs" style="left:672px;top:863px;height:23px"></div>
<div class="t" style="left:680px;top:868px">Zugehörige Maßnahme</div>
<div class="cs" style="left:929px;top:863px;height:23px"></div>
<div class="pn" style="left:967px;top:126px;width:389px;height:808px"></div>
<div class="ph" style="left:967px;top:126px;width:389px;height:38px"><div class="t b" style="left:8px;top:12px">Wirtschaftliche Kenndaten (Angaben ohne Gewähr!)</div></div>
<div class="grp" style="left:970px;top:174px;width:386px;height:183px"></div><div class="t" style="left:976px;top:168px;background:#fff;padding:0 2px">Investition</div>
<div class="t" style="right:336px;top:187px">maximal förderfähige Kosten</div><div class="tbx w" style="left:1250px;top:183px;width:84px"><div class="t nm" style="right:21px;top:3px;color:#7a7a7a">180.000</div></div><div class="ab" style="left:1316px;top:186px"><svg style="left:2px;top:2px" width="13" height="13"><path d="M1.5 12.5 L6.5 1 L11.5 12.5 M3.5 8.5 H9.5" fill="none" stroke="#fff" stroke-width="1.5"/></svg></div><div class="t" style="left:1338px;top:187px">€</div>
<div class="t" style="right:336px;top:214px">förderfähige Kosten vorige Sanierungsschritte -</div><div class="tbx" style="left:1250px;top:210px;width:84px"><div class="t nm" style="right:5px;top:3px">0</div></div><div class="t" style="left:1338px;top:214px">€</div>
<div class="t" style="right:336px;top:241px">im aktuellen Sanierungsschritt bereits verwendet -</div><div class="tbx" style="left:1250px;top:237px;width:84px"><div class="t nm" style="right:5px;top:3px">0</div></div><div class="t" style="left:1338px;top:241px">€</div>
<div class="t" style="right:336px;top:268px">mögliche förderfähige Kosten =</div><div class="tbx" style="left:1250px;top:264px;width:84px"><div class="t nm" style="right:5px;top:3px">180.000</div></div><div class="t" style="left:1338px;top:268px">€</div>
<div class="a" style="left:1231px;top:295px;width:95px;height:1px;background:#222"></div>
<div class="t" style="right:336px;top:305px">BEG-relevante Kosten</div><div class="tbx w" style="left:1250px;top:301px;width:84px"><div class="t nm" style="right:21px;top:3px;color:#7a7a7a">155.824</div></div><div class="ab" style="left:1316px;top:304px"><svg style="left:2px;top:2px" width="13" height="13"><path d="M1.5 12.5 L6.5 1 L11.5 12.5 M3.5 8.5 H9.5" fill="none" stroke="#fff" stroke-width="1.5"/></svg></div><div class="t" style="left:1338px;top:305px">€</div>
<div class="t" style="right:336px;top:332px">maximal förderfähige Kosten</div><div class="tbx" style="left:1250px;top:328px;width:84px"><div class="t nm" style="right:5px;top:3px">155.824</div></div><div class="t" style="left:1338px;top:332px">€</div>
<div class="grp" style="left:970px;top:372px;width:386px;height:291px"></div><div class="t" style="left:976px;top:366px;background:#fff;padding:0 2px">Förderung</div>
<div class="a" style="left:983px;top:389px;width:13px;height:13px;border:1px solid #c8c8c8;border-radius:50%;background:#fafafa"></div>
<div class="t" style="left:999px;top:389px;color:#8a8a8a">Kredit</div>
<div class="a" style="left:1064px;top:389px;width:13px;height:13px;border:3.5px solid #005fb8;border-radius:50%;background:#fff"></div>
<div class="t" style="left:1080px;top:389px">Zuschuss</div>
<div class="t" style="right:506px;top:418px">Zuschuss</div><div class="tbx w" style="left:1080px;top:413px;width:82px"><div class="t nm" style="right:21px;top:3px;color:#7a7a7a">15,0</div></div><div class="ab" style="left:1144px;top:416px"><svg style="left:2px;top:2px" width="13" height="13"><path d="M1.5 12.5 L6.5 1 L11.5 12.5 M3.5 8.5 H9.5" fill="none" stroke="#fff" stroke-width="1.5"/></svg></div><div class="t" style="left:1167px;top:418px">%</div><div class="tbx" style="left:1250px;top:413px;width:84px"><div class="t nm" style="right:5px;top:3px">23.374</div></div><div class="t" style="left:1338px;top:417px">€</div>
<div class="t" style="right:506px;top:445px">Zuschuss-Bonus</div><div class="tbx w" style="left:1080px;top:440px;width:82px"><div class="t nm" style="right:21px;top:3px;color:#7a7a7a">5,0</div></div><div class="ab" style="left:1144px;top:443px"><svg style="left:2px;top:2px" width="13" height="13"><path d="M1.5 12.5 L6.5 1 L11.5 12.5 M3.5 8.5 H9.5" fill="none" stroke="#fff" stroke-width="1.5"/></svg></div><div class="t" style="left:1167px;top:445px">%</div><div class="tbx" style="left:1250px;top:444px;width:84px"><div class="t nm" style="right:5px;top:3px">7.791</div></div><div class="t" style="left:1338px;top:448px">€</div>
<div class="t" style="left:978px;top:472px">Bonusprogramme</div>
<div class="a" style="left:1080px;top:473px;width:13px;height:13px;background:#d8d8d8;border:1px solid #cfcfcf;border-radius:2.5px"></div>
<svg style="left:1082px;top:475px" width="9" height="9"><path d="M1 4.5 L3.5 7 L8 2" fill="none" stroke="#fff" stroke-width="1.2"/></svg>
<div class="t" style="left:1096px;top:472px;color:#8a8a8a">iSFP</div>
<div class="grp" style="left:970px;top:678px;width:386px;height:68px"></div><div class="t" style="left:976px;top:672px;background:#fff;padding:0 2px">Ergebnis</div>
<div class="t" style="right:336px;top:690px">geldwerter Vorteil</div><div class="tbx" style="left:1250px;top:686px;width:84px"><div class="t nm" style="right:5px;top:3px">31.165</div></div><div class="t" style="left:1338px;top:690px">€</div>
<div class="t" style="left:1130px;top:715px">BAFA-Förderung (Zuschuss)</div>
<div class="a" style="left:342px;top:937px;width:1241px;height:2px;background:#f6f6f6"></div><div class="a" style="left:0;top:939px;width:1583px;height:3px;background:#a4a4a4"></div><div class="a" style="left:745px;top:940px;width:1px;height:2px;background:#333"></div><div class="a" style="left:786px;top:940px;width:1px;height:2px;background:#333"></div><div class="a" style="left:800px;top:940px;width:1px;height:2px;background:#333"></div><div class="a" style="left:831px;top:940px;width:8px;height:2px;background:#333"></div><div class="a" style="left:917px;top:940px;width:1px;height:2px;background:#333"></div><div class="a" style="left:933px;top:940px;width:1px;height:2px;background:#333"></div><div class="a" style="left:1006px;top:940px;width:1px;height:2px;background:#333"></div><div class="a" style="left:1020px;top:940px;width:1px;height:2px;background:#333"></div><div class="a" style="left:1080px;top:940px;width:1px;height:2px;background:#333"></div><div class="a" style="left:1090px;top:940px;width:1px;height:2px;background:#333"></div><div class="a" style="left:1124px;top:940px;width:1px;height:2px;background:#333"></div><div class="a" style="left:1132px;top:940px;width:1px;height:2px;background:#333"></div><div class="a" style="left:1147px;top:940px;width:8px;height:2px;background:#333"></div><div class="a" style="left:1207px;top:940px;width:1px;height:2px;background:#333"></div><div class="a" style="left:1239px;top:940px;width:1px;height:2px;background:#333"></div><div class="a" style="left:1244px;top:940px;width:1px;height:2px;background:#333"></div><div class="a" style="left:1254px;top:940px;width:3px;height:2px;background:#333"></div><div class="a" style="left:1317px;top:940px;width:1px;height:2px;background:#333"></div><div class="a" style="left:1385px;top:940px;width:1px;height:2px;background:#333"></div>
<div class="a" id="sb"></div>
<div class="a" style="left:1362px;top:88px;width:196px;height:20px;background:#fff;border:1px solid #e8e8e8"><div class="t" style="left:3px;top:3px">Wärmedämmung, Fenster, Lüftu</div></div>
<svg style="left:1544px;top:95px" width="9" height="6"><path d="M0.5 0.5 L4.5 4.5 L8.5 0.5" fill="none" stroke="#333" stroke-width="1"/></svg>
<div class="a" style="left:1560px;top:88px;width:21px;height:20px;border:1.5px solid #1a5fb0;border-radius:4px;background:#d8ecfa"></div><div class="a" style="left:1563px;top:91px;width:15px;height:15px;background:#a9d134"></div>
<svg style="left:1565px;top:93px" width="11" height="12"><path d="M0.6 12 L5.5 0.8 L10.4 12 M2.5 8.5 H8.5" fill="none" stroke="#fff" stroke-width="1.4"/></svg>
<div class="a" style="left:1567px;top:108px;width:15px;height:807px;background:#fafafa"></div><div class="a" style="left:1362px;top:108px;width:205px;height:807px;background:#808080"></div><div class="a" style="left:1582px;top:51px;width:1px;height:891px;background:#b8b8b8"></div>
<svg style="left:1569px;top:112px" width="10" height="8"><path d="M0.5 7.5 L5 1 L9.5 7.5 Z" fill="#8a8a8a" stroke="#8a8a8a" stroke-width="0.8" stroke-linejoin="round"/></svg>
<div class="a" style="left:1570px;top:126px;width:9px;height:763px;background:#8a8a8a;border-radius:4.5px"></div>
<svg style="left:1569px;top:904px" width="10" height="8"><path d="M0.5 0.5 L5 7 L9.5 0.5 Z" fill="#8a8a8a" stroke="#8a8a8a" stroke-width="0.8" stroke-linejoin="round"/></svg>
<div class="card" style="top:110px;height:334px"><div class="ct" style="top:9px">GEG 2024</div><div class="cd" style="top:30px">DIN V 18599</div><div class="a" style="left:168px;top:11px;width:18px;height:18px;border-radius:50%;background:#b52a28"></div><div class="box" style="top:49px;height:132px"><div class="lab"></div><div class="a" style="left:17px;top:0;width:153px;height:132px;background:#ecb03e"></div><div class="t" style="left:-33px;top:58px;width:80px;text-align:center;font-size:8.5px;line-height:12px;color:#000;transform:rotate(-90deg)">Effizienzklasse</div><div class="t" style="left:58px;top:4px;font-size:126px;line-height:126px;color:#fff;-webkit-text-stroke:2.2px #fff;transform:scaleX(0.87);transform-origin:0 0">E</div><div class="t" style="left:56px;top:113px;font-size:13px;letter-spacing:0.1px;line-height:16px;color:#fff;text-shadow:0 0 1.5px #6a5020,0 0 2px #6a5020"><b>136,3</b> kWh/(m²a)</div></div><div class="box" style="top:187px;height:50px"><div class="lab"></div><div class="t" style="left:-33px;top:19px;width:80px;text-align:center;font-size:9px;line-height:12px;color:#000;transform:rotate(-90deg)">Q P</div><div class="bar" style="top:0.0px;width:92px;height:16.7px;background:#d3d3d3"><div class="bt" style="top:2.3px">77,5 kWh/(m²a)</div></div><div class="bar" style="top:16.7px;width:128px;height:16.7px;background:#4682b4"><div class="bt" style="top:2.3px">108,5 kWh/(m²a)</div></div><div class="bar" style="top:33.3px;width:153px;height:16.7px;background:linear-gradient(90deg,#3e8a12 0%,#9ccc3c 28%,#f6de3c 47%,#f0b040 62%,#e07830 80%,#b82a2a 100%)"><div class="bt" style="top:2.3px">153,5 kWh/(m²a)</div></div></div><div class="box" style="top:243px;height:50px"><div class="lab"></div><div class="t" style="left:-33px;top:19px;width:80px;text-align:center;font-size:9px;line-height:12px;color:#000;transform:rotate(-90deg)">HT</div><div class="bar" style="top:0.0px;width:78px;height:16.7px;background:#d3d3d3"><div class="bt" style="top:2.3px">0,40 W/(m²K)</div></div><div class="bar" style="top:16.7px;width:138px;height:16.7px;background:#4682b4"><div class="bt" style="top:2.3px">0,70 W/(m²K)</div></div><div class="bar" style="top:33.3px;width:105px;height:16.7px;background:linear-gradient(90deg,#3e8a12 0%,#9ccc3c 40%,#f6de3c 70%,#f0b040 100%)"><div class="bt" style="top:2.3px">0,53 W/(m²K)</div></div></div><div class="box" style="top:300px;height:17px"><div class="lab"></div><div class="t" style="left:-33px;top:2px;width:80px;text-align:center;font-size:9px;line-height:12px;color:#000;transform:rotate(-90deg)">EH</div><div class="a" style="left:17px;top:0;width:34px;height:17px;background:#b52a28"><div class="t" style="right:0;top:2px;font-size:9px;line-height:12px;color:#fff;font-weight:bold">40</div></div><div class="a" style="left:53px;top:0;width:13px;height:17px;background:#b52a28"><div class="t" style="right:0;top:2px;font-size:9px;line-height:12px;color:#fff;font-weight:bold">55</div></div><div class="a" style="left:68px;top:0;width:12px;height:17px;background:#b52a28"><div class="t" style="right:0;top:2px;font-size:9px;line-height:12px;color:#fff;font-weight:bold">70</div></div><div class="a" style="left:82px;top:0;width:13px;height:17px;background:#b52a28"><div class="t" style="right:0;top:2px;font-size:9px;line-height:12px;color:#fff;font-weight:bold">85</div></div><div class="a" style="left:97px;top:0;width:71px;height:17px;background:#b52a28"><div class="t" style="right:0;top:2px;font-size:9px;line-height:12px;color:#fff;font-weight:bold">160</div></div></div></div>
<div class="card" style="top:447px;height:104px"><div class="ct" style="top:9px;line-height:21px">Erneuerbare<br>Energien</div><div class="a" style="left:168px;top:12px;width:18px;height:18px;border-radius:50%;border:1.3px solid #111;background:#fff"></div><div class="box" style="top:54px;height:32px"><div class="lab"></div><div class="t" style="left:-33px;top:10px;width:80px;text-align:center;font-size:8px;line-height:12px;color:#000;transform:rotate(-90deg)">EE</div><div class="bar" style="top:0.0px;width:100px;height:16.0px;background:#d3d3d3"><div class="bt" style="top:2.0px">65 %</div></div><div class="bar" style="top:16.0px;width:0px;height:16.0px;background:transparent"><div class="bt" style="top:2.0px">0 %</div></div></div></div>
<div class="card" style="top:555px;height:69px"><div class="ct" style="top:8px;line-height:21px">Sommerlicher<br>Wärmeschutz</div><div class="cd" style="top:50px">DIN 4108-2</div><div class="a" style="left:168px;top:11px;width:18px;height:18px;border-radius:50%;border:1.3px solid #111;background:#fff"></div></div>
<div class="card" style="top:628px;height:83px"><div class="ct" style="top:9px">Heizlast</div><div class="cd" style="top:30px">DIN 12831</div><div class="box" style="top:49px;height:17px"><div class="lab"></div><div class="t" style="left:-33px;top:2px;width:80px;text-align:center;font-size:9px;line-height:12px;color:#000;transform:rotate(-90deg)">⊖</div><div class="bar" style="top:0.0px;width:0px;height:17.0px;background:transparent"><div class="bt" style="top:2.5px">15,2 kW</div></div></div></div>
<div class="card" style="top:715px;height:96px"><div class="ct" style="top:9px">Lüftungskonzept</div><div class="cd" style="top:29px">DIN 1946-6</div><div class="a" style="left:168px;top:10px;width:18px;height:18px;border-radius:50%;background:#7ab32a"></div><div class="box" style="top:47px;height:34px"><div class="lab"></div><div class="t" style="left:-33px;top:11px;width:80px;text-align:center;font-size:8px;line-height:12px;color:#000;transform:rotate(-90deg)">inf min</div><div class="bar" style="top:0.0px;width:77px;height:17.0px;background:#d3d3d3"><div class="bt" style="top:2.5px">51 m³/h</div></div><div class="bar" style="top:17.0px;width:20px;height:17.0px;background:#4682b4"><div class="bt" style="top:2.5px">13 m³/h</div></div></div></div>
<div class="card" style="top:815px;height:100px"><div class="ct" style="top:9px">Beratung</div><div class="cd" style="top:31px">DIN V 18599</div><div class="box" style="top:49px;height:17px"><div class="lab"></div><div class="t" style="left:-33px;top:2px;width:80px;text-align:center;font-size:9px;line-height:12px;color:#000;transform:rotate(-90deg)">Qf</div><div class="bar" style="top:0.0px;width:77px;height:17.0px;background:linear-gradient(90deg,#3e8a12 0%,#9ccc3c 55%,#f6de3c 100%)"><div class="bt" style="top:2.5px">100,0 kWh/(m²a)</div></div></div><div class="box" style="top:73px;height:17px"><div class="lab"></div><div class="t" style="left:-33px;top:2px;width:80px;text-align:center;font-size:8px;line-height:12px;color:#000;transform:rotate(-90deg)">CO2</div><div class="bar" style="top:0.0px;width:63px;height:17.0px;background:linear-gradient(90deg,#3e8a12 0%,#9ccc3c 60%,#f6de3c 100%)"><div class="bt" style="top:2.5px">32,58 kg/(m²a)</div></div></div></div>
<div class="a" style="left:1359px;top:915px;width:224px;height:22px;background:#f0f0f0"></div>
</body></html>
